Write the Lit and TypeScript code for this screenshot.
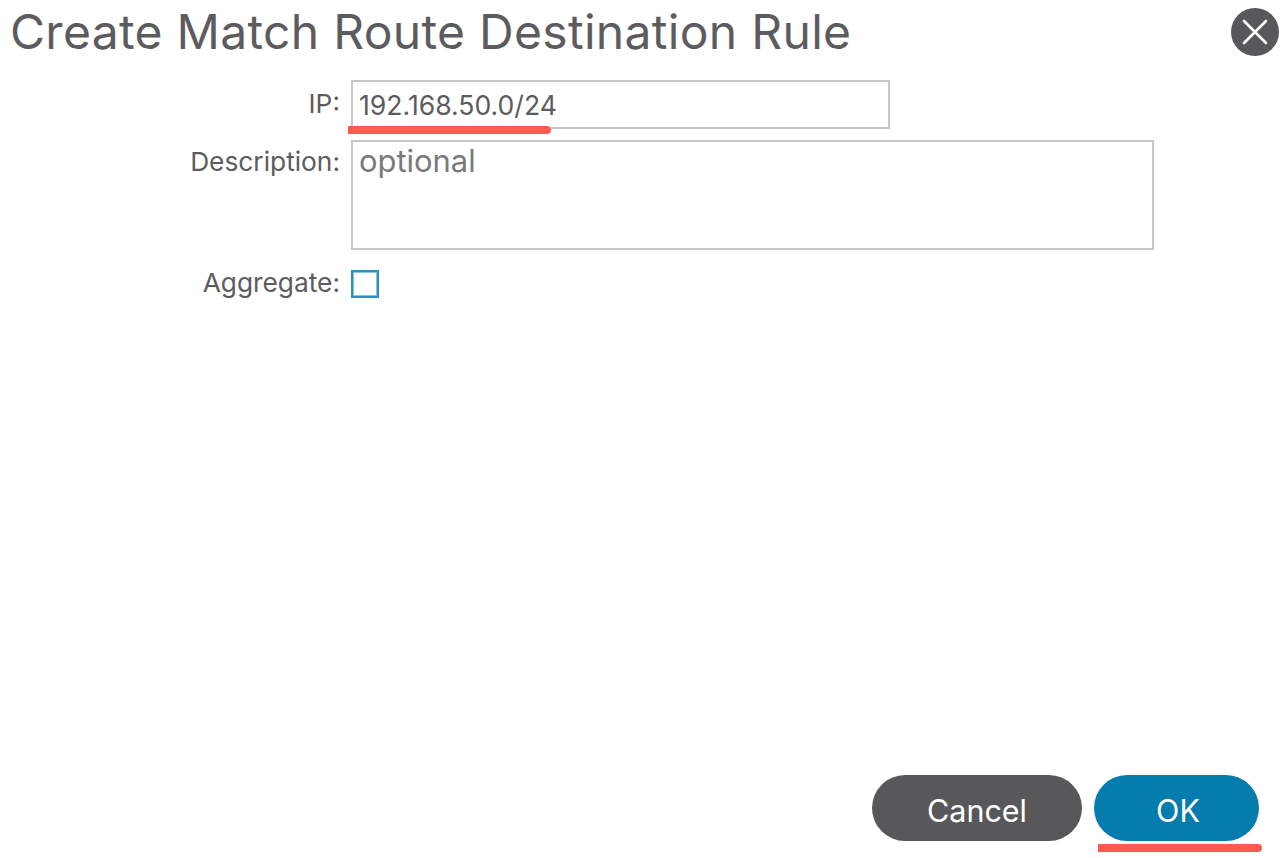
import { LitElement, html, css } from "lit";
import { customElement } from "lit/decorators.js";

@customElement("app-root")
export class AppRoot extends LitElement {
  static styles = css`
    :host {
      display: flex;
      flex-direction: column;
      height: 858px;
      width: 1284px;
      box-sizing: border-box;
      background: #fff;
      font-family: Inter, "Liberation Sans", sans-serif;
      color: #5c5c5f;
      overflow: hidden;
    }
    .head {
      display: flex;
      align-items: center;
      justify-content: space-between;
      height: 64px;
      padding: 0 5px 0 10px;
      flex: none;
    }
    .title {
      margin: 0;
      font-size: 48px;
      font-weight: 400;
      line-height: 64px;
      letter-spacing: 0.3px;
    }
    .close {
      width: 48px;
      height: 48px;
      border: 0;
      padding: 0;
      border-radius: 50%;
      background: #58585b;
      display: flex;
      align-items: center;
      justify-content: center;
    }
    .form {
      display: flex;
      flex-direction: column;
      padding-top: 16px;
      flex: 1;
    }
    .row {
      display: grid;
      grid-template-columns: 340px auto;
      column-gap: 11px;
      justify-content: start;
    }
    .row label {
      text-align: right;
      font-size: 26.3px;
      line-height: 30px;
    }
    .r-ip { height: 60px; }
    .r-ip label { padding-top: 9px; }
    .r-desc { height: 130px; }
    .r-desc label { padding-top: 7px; }
    .r-agg { align-items: start; height: 28px; }
    .r-agg label { margin-top: -2px; }
    .box {
      position: relative;
      box-sizing: border-box;
      border: 2px solid #c6c7ca;
      background: #fff;
      padding-left: 6px;
    }
    .ip {
      width: 539px;
      height: 49px;
      line-height: 46px;
      font-size: 26.6px;
      color: #5c5c5f;
    }
    .desc {
      width: 803px;
      height: 110px;
      line-height: 38px;
      font-size: 30.9px;
      color: #7a7a7d;
    }
    .check {
      box-sizing: border-box;
      width: 28px;
      height: 28px;
      border: 2px solid #2b8fc4;
      background: #fff;
      box-shadow: inset 0 0 0 1px #86c3e2;
    }
    .foot {
      display: flex;
      justify-content: flex-end;
      gap: 12px;
      padding: 0 25px 17px 0;
      flex: none;
    }
    .btn {
      position: relative;
      height: 66px;
      border: 0;
      border-radius: 33px;
      color: #fff;
      font: 400 30.5px/61px Inter, "Liberation Sans", sans-serif;
      padding: 5px 0 0;
      box-sizing: border-box;
    }
    .cancel { width: 210px; background: #58585b; }
    .ok { width: 165px; background: #047cad; padding-left: 3px; }
    .mark {
      position: absolute;
      height: 8px;
      background: #ff5a4f;
      border-radius: 0 4px 4px 0;
    }
    .mark-ip { left: -5px; top: 44px; width: 203px; }
    .mark-ok { left: 4px; top: 69px; width: 164px; }
  `;

  render() {
    return html`
      <div class="head">
        <h1 class="title">Create Match Route Destination Rule</h1>
        <button class="close" aria-label="Close">
          <svg width="26" height="26" viewBox="0 0 26 26">
            <path d="M2 2 L24 24 M24 2 L2 24" stroke="#fff" stroke-width="2.6" stroke-linecap="round" fill="none" />
          </svg>
        </button>
      </div>
      <div class="form">
        <div class="row r-ip">
          <label>IP:</label>
          <div class="box ip">192.168.50.0/24<span class="mark mark-ip"></span></div>
        </div>
        <div class="row r-desc">
          <label>Description:</label>
          <div class="box desc">optional</div>
        </div>
        <div class="row r-agg">
          <label>Aggregate:</label>
          <div class="check"></div>
        </div>
      </div>
      <div class="foot">
        <button class="btn cancel">Cancel</button>
        <button class="btn ok">OK<span class="mark mark-ok"></span></button>
      </div>
    `;
  }
}
